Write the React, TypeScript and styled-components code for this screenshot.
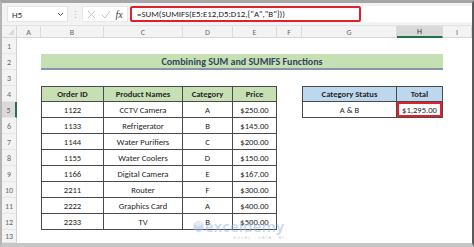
import React from "react";
import styled, { createGlobalStyle } from "styled-components";

const GlobalStyle = createGlobalStyle`
  html, body {
    margin: 0;
    padding: 0;
    background: #fff;
  }
  body {
    width: 474px;
    height: 247px;
    overflow: hidden;
    font-family: Carlito, Lato, "Liberation Sans", sans-serif;
  }
`;

type Kind = "plain" | "title" | "headG" | "headB" | "data" | "total";

interface CellDef {
  text?: string;
  kind?: Kind;
  span?: number;
  left?: boolean;
  top?: boolean;
}

const Frame = styled.div`
  position: relative;
  width: 474px;
  height: 247px;
  box-sizing: border-box;
  border-style: solid;
  border-width: 3px 2px 4px 2px;
  border-color: #a6a6a6 #5a5a5a #c6c6c6 #b4b4b4;
  display: flex;
  flex-direction: column;
  background: #fff;
  overflow: hidden;
`;

const FormulaBar = styled.div`
  height: 23px;
  flex: none;
  display: flex;
  align-items: center;
  padding-left: 5px;
  background: #f3f3f3;
  border-bottom: 1px solid #e2e2e2;
  box-sizing: border-box;
`;

const NameBox = styled.div`
  width: 61px;
  height: 16px;
  box-sizing: border-box;
  background: #fff;
  border: 1px solid #e4e4e4;
  display: flex;
  align-items: center;
  justify-content: space-between;
  padding: 0 3px 0 4px;
  font-size: 9px;
  color: #333;
`;

const Dots = styled.div`
  width: 14px;
  text-align: center;
  color: #b8b8b8;
  font-size: 9px;
  line-height: 1;
`;

const FuncBox = styled.div`
  width: 46px;
  height: 16px;
  box-sizing: border-box;
  background: #fff;
  border: 1px solid #e8e8e8;
  display: flex;
  align-items: center;
  justify-content: space-around;
  padding: 0 2px;
`;

const Fx = styled.span`
  font-family: "Liberation Serif", serif;
  font-style: italic;
  font-size: 10px;
  color: #3c3c3c;
`;

const FormulaField = styled.div`
  flex: 1;
  height: 16px;
  margin-left: 2px;
  background: #fff;
  display: flex;
  align-items: center;
`;

const Highlight = styled.div`
  width: 231px;
  height: 16px;
  box-sizing: border-box;
  border: 2px solid #e2202c;
  border-radius: 2px;
  display: flex;
  align-items: center;
  padding-left: 5px;
  font-size: 8.9px;
  color: #222;
  white-space: nowrap;
`;

const Sheet = styled.div`
  flex: 1;
  display: grid;
  grid-template-columns: 15px 24px 63px 79px 50px 44px 25px 95px 46px 1fr;
  grid-template-rows: 12px repeat(12, 16px) 1fr;
`;

const Corner = styled.div`
  background: #f3f3f3;
  border-right: 1px solid #d6d6d6;
  border-bottom: 1px solid #d6d6d6;
  position: relative;
  &::after {
    content: "";
    position: absolute;
    right: 2px;
    bottom: 2px;
    border-left: 6px solid transparent;
    border-bottom: 6px solid #d8d8d8;
  }
`;

const ColHead = styled.div<{ $active?: boolean }>`
  box-sizing: border-box;
  display: flex;
  align-items: center;
  justify-content: center;
  font-size: 8px;
  color: ${(p) => (p.$active ? "#3a3a3a" : "#6a6a6a")};
  background: ${(p) => (p.$active ? "#d9d9d9" : "#f3f3f3")};
  border-right: 1px solid #dcdcdc;
  border-bottom: ${(p) => (p.$active ? "2px solid #217346" : "1px solid #d6d6d6")};
`;

const RowHead = styled.div<{ $active?: boolean }>`
  box-sizing: border-box;
  display: flex;
  align-items: center;
  justify-content: center;
  font-size: 8px;
  color: #6a6a6a;
  background: ${(p) => (p.$active ? "#d9d9d9" : "#f3f3f3")};
  border-right: ${(p) => (p.$active ? "2px solid #217346" : "1px solid #d0d0d0")};
  border-bottom: 1px solid #e6e6e6;
`;

const fills: Record<Kind, string> = {
  plain: "transparent",
  title: "#c6e0b4",
  headG: "#c6e0b4",
  headB: "#bdd7ee",
  data: "#fff",
  total: "#fff",
};

const Cell = styled.div<{ $kind: Kind; $span: number; $left?: boolean; $top?: boolean }>`
  grid-column: span ${(p) => p.$span};
  box-sizing: border-box;
  display: flex;
  align-items: center;
  justify-content: center;
  white-space: nowrap;
  font-size: 8.6px;
  color: #262626;
  background: ${(p) => fills[p.$kind]};
  font-weight: ${(p) => (p.$kind === "headG" || p.$kind === "headB" ? 700 : 400)};
  ${(p) =>
    p.$kind !== "plain" && p.$kind !== "title"
      ? `border-right: 1px solid #4a4a4a; border-bottom: 1px solid #4a4a4a;`
      : ""}
  ${(p) => (p.$left ? "border-left: 1px solid #4a4a4a;" : "")}
  ${(p) => (p.$top ? "border-top: 1px solid #4a4a4a;" : "")}
  ${(p) =>
    p.$kind === "title"
      ? `font-size: 10px; font-weight: 700; color: #33475b; border-bottom: 2px solid #8496b0;`
      : ""}
  ${(p) => (p.$kind === "total" ? "box-shadow: inset 0 0 0 2px #e2202c;" : "")}
`;

const Watermark = styled.div`
  position: absolute;
  left: 191px;
  top: 216px;
  display: flex;
  flex-direction: column;
  align-items: flex-end;
  opacity: 0.5;
  pointer-events: none;
`;

const MarkRow = styled.div`
  display: flex;
  align-items: center;
  gap: 1px;
`;

const MarkText = styled.span`
  font-family: "Open Sans", sans-serif;
  font-size: 15px;
  font-weight: 600;
  color: #8fb0dc;
  line-height: 1;
  letter-spacing: 0.2px;
`;

const MarkTag = styled.span`
  font-family: "Liberation Sans", sans-serif;
  font-size: 4px;
  color: #9a9a9a;
  letter-spacing: 1px;
  margin-top: 1px;
`;

const columns = ["A", "B", "C", "D", "E", "F", "G", "H", "I"];

const orders = [
  ["1122", "CCTV Camera", "A", "$250.00"],
  ["1133", "Refrigerator", "B", "$145.00"],
  ["1144", "Water Purifiers", "C", "$200.00"],
  ["1155", "Water Coolers", "D", "$150.00"],
  ["1166", "Digital Camera", "E", "$167.00"],
  ["2211", "Router", "F", "$300.00"],
  ["2222", "Graphics Card", "A", "$400.00"],
  ["2233", "TV", "B", "$500.00"],
];

const blank: CellDef = {};

const buildRows = (): CellDef[][] => {
  const rows: CellDef[][] = [];
  rows.push([{ span: 9 }]);
  rows.push([blank, { text: "Combining SUM and SUMIFS Functions", kind: "title", span: 7 }, blank]);
  rows.push([{ span: 9 }]);
  rows.push([
    blank,
    { text: "Order ID", kind: "headG", left: true, top: true },
    { text: "Product Names", kind: "headG", top: true },
    { text: "Category", kind: "headG", top: true },
    { text: "Price", kind: "headG", top: true },
    blank,
    { text: "Category Status", kind: "headB", left: true, top: true },
    { text: "Total", kind: "headB", top: true },
    blank,
  ]);
  orders.forEach((o, i) => {
    const row: CellDef[] = [
      blank,
      { text: o[0], kind: "data", left: true },
      { text: o[1], kind: "data" },
      { text: o[2], kind: "data" },
      { text: o[3], kind: "data" },
    ];
    if (i === 0) {
      row.push(blank, { text: "A & B", kind: "data", left: true }, { text: "$1,295.00", kind: "total" }, blank);
    } else {
      row.push({ span: 4 });
    }
    rows.push(row);
  });
  rows.push([{ span: 9 }]);
  return rows;
};

const Chevron = () => (
  <svg width="7" height="5" viewBox="0 0 7 5">
    <path d="M1 1l2.5 2.5L6 1" fill="none" stroke="#555" strokeWidth="1" />
  </svg>
);

const Cross = () => (
  <svg width="9" height="9" viewBox="0 0 9 9">
    <path d="M1 1l7 7M8 1l-7 7" stroke="#c4c4c4" strokeWidth="1" />
  </svg>
);

const Check = () => (
  <svg width="10" height="9" viewBox="0 0 10 9">
    <path d="M1 5l3 3 5-7" fill="none" stroke="#c4c4c4" strokeWidth="1" />
  </svg>
);

const Cube = () => (
  <svg width="11" height="13" viewBox="0 0 11 13">
    <path d="M5.5 0.5L10.5 3.5V9.5L5.5 12.5L0.5 9.5V3.5Z" fill="#9fbde3" />
    <path d="M5.5 0.5L10.5 3.5L5.5 6.5L0.5 3.5Z" fill="#c7d9f0" />
    <path d="M5.5 6.5V12.5" stroke="#7ea3d4" strokeWidth="0.6" />
  </svg>
);

const App: React.FC = () => {
  const rows = buildRows();
  return (
    <>
      <GlobalStyle />
      <Frame>
        <FormulaBar>
          <NameBox>
            <span>H5</span>
            <Chevron />
          </NameBox>
          <Dots>⋮</Dots>
          <FuncBox>
            <Cross />
            <Check />
            <Fx>fx</Fx>
          </FuncBox>
          <FormulaField>
            <Highlight>=SUM(SUMIFS(E5:E12,D5:D12,{"{"}"A","B"{"}"}))</Highlight>
          </FormulaField>
        </FormulaBar>
        <Sheet>
          <Corner />
          {columns.map((c) => (
            <ColHead key={c} $active={c === "H"}>
              {c}
            </ColHead>
          ))}
          {rows.map((cells, r) => (
            <React.Fragment key={r}>
              <RowHead $active={r + 1 === 5}>{r + 1}</RowHead>
              {cells.map((c, i) => (
                <Cell key={i} $kind={c.kind ?? "plain"} $span={c.span ?? 1} $left={c.left} $top={c.top}>
                  {c.text}
                </Cell>
              ))}
            </React.Fragment>
          ))}
        </Sheet>
        <Watermark>
          <MarkRow>
            <Cube />
            <MarkText>exceldemy</MarkText>
          </MarkRow>
          <MarkTag>EXCEL · DATA · BI</MarkTag>
        </Watermark>
      </Frame>
    </>
  );
};

export default App;
